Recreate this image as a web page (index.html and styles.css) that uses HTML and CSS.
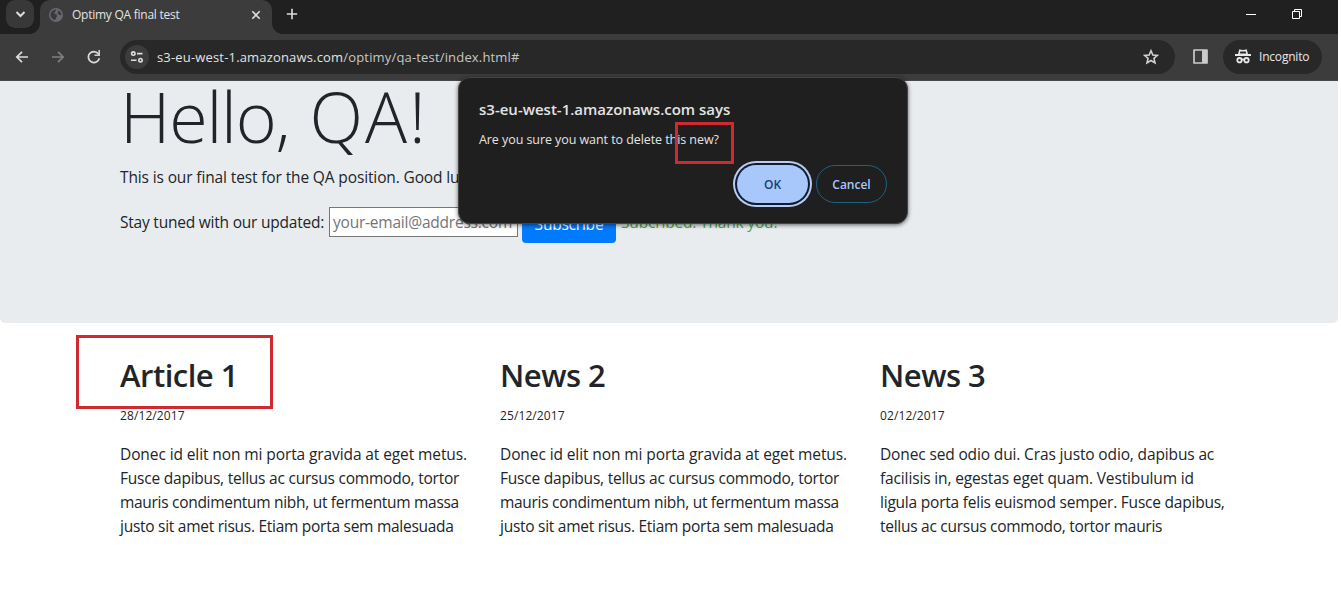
FILE: index.html
```html
<!DOCTYPE html>
<html lang="en">
<head>
<meta charset="utf-8">
<title>Optimy QA final test</title>
<link rel="stylesheet" href="styles.css">
</head>
<body>
<div class="browser">
  <header class="tabstrip">
    <div class="tab-search"><svg width="28" height="28" viewBox="0 0 28 28"><path class="st" stroke-width="2" d="M10.500 12l4 4 4-4"/></svg></div>
    <div class="tab">
      <svg class="globe" width="14" height="14" viewBox="0 0 14 14"><circle cx="7" cy="7" r="7" fill="#666970"/><path d="M1.500 6.500C1.800 3.800 4 1.600 7 1.500c.8.900-.2 1.700-1.200 2 .5 1-.3 1.800-1.200 2 1.400.4 3.200.8 3.500 2.300.1 1.200-1.300 1.600-1.300 2.700 0 .8-.6 1.500-1.200 1.600C3.300 11.300 1.600 9.300 1.500 6.500zM9 2.200c2 .8 3.300 2.600 3.500 4.600-.7.700-1.700.6-2.300 0-.5-.6-1.500-.5-1.900-1.200-.2-.8.900-1 1-1.700z" fill="#3a3a3b"/></svg>
      <span class="tab-title">Optimy QA final test</span>
      <svg class="tab-close" width="10" height="10" viewBox="0 0 10 10"><path class="st" stroke-width="1.600" d="M1.300 1.300l7.400 7.400M8.700 1.300L1.300 8.700"/></svg>
    </div>
    <svg class="plus" width="12" height="12" viewBox="0 0 12 12"><path class="st" stroke-width="1.600" d="M6 .8v10.400M.8 6h10.400"/></svg>
    <div class="window-buttons">
      <svg width="10" height="11" viewBox="0 0 10 11"><path d="M0 6.500h10" stroke="#fff"/></svg>
      <svg width="10" height="11" viewBox="0 0 10 11"><path d="M.5 3.500h7v7h-7zM2.500 3.500v-2h7v7h-2" fill="none" stroke="#fff"/></svg>
    </div>
  </header>
  <nav class="toolbar">
    <svg class="nav-icon" width="14" height="14" viewBox="0 0 14 14"><path class="st" stroke-width="1.700" d="M13 7H2M7 1.800L1.800 7 7 12.200"/></svg>
    <svg class="nav-icon dim" width="14" height="14" viewBox="0 0 14 14"><path class="st" stroke-width="1.700" d="M1 7h11M7 1.800L12.200 7 7 12.200"/></svg>
    <svg class="nav-icon" width="14" height="14" viewBox="0 0 14 14"><path class="st" stroke-width="1.700" d="M12.300 8.200A5.500 5.500 0 1 1 11.300 3.700L12.500 5"/><path d="M13 0v6H7.500V4.400h3.900V0z" fill="#d0d0d1"/></svg>
    <div class="omnibox">
      <span class="site-info"><svg width="14" height="12" viewBox="0 0 14 12"><g fill="none" stroke="#dedede" stroke-width="1.600"><circle cx="3.300" cy="2.600" r="1.700"/><path d="M7 2.600h5.500M1 9.200h5.500"/><circle cx="10.500" cy="9.200" r="1.700"/></g></svg></span>
      <span class="url"><b>s3-eu-west-1.amazonaws.com</b><i>/optimy/qa-test/index.html#</i></span>
      <svg class="star" width="16" height="16" viewBox="0 0 16 16"><path fill="none" stroke="#d2d2d3" stroke-width="1.600" d="M8 1.700l1.850 4.250 4.600.4-3.500 3.050 1.050 4.500L8 11.500l-4 2.400 1.050-4.500-3.500-3.050 4.600-.4z"/></svg>
    </div>
    <svg class="panel" width="15" height="15" viewBox="0 0 15 15"><path d="M1 1h13v13H1z" fill="none" stroke="#cbcbcc" stroke-width="1.700" stroke-linejoin="round"/><path d="M9 1h5v13H9z" fill="#cbcbcc"/></svg>
    <div class="incognito">
      <svg width="16" height="15" viewBox="0 0 16 15"><path d="M4.300.3Q8 1.500 11.700.3L13 5H16v2H0V5h3z" fill="#e8e8e8"/><path d="M5.300 2.400h5.400l.5 2H4.800z" fill="#292929"/><g fill="none" stroke="#e8e8e8" stroke-width="1.800"><circle cx="4.500" cy="11.200" r="2.200"/><circle cx="11.500" cy="11.200" r="2.200"/><path d="M6.800 10.800q1.200-.8 2.400 0"/></g></svg>
      <span class="incognito-label">Incognito</span>
    </div>
  </nav>
  <main class="page">
    <section class="jumbotron">
      <h1><span class="hello">Hello,</span> <span class="qa">QA!</span></h1>
      <p class="lead">This is our final test for the QA position. Good luck!</p>
      <div class="subscribe">
        <span class="subscribe-label">Stay tuned with our updated:</span>
        <span class="email">your-email@address.com</span>
        <span class="button">Subscribe</span>
        <span class="success">Subcribed. Thank you!</span>
      </div>
    </section>
    <section class="news">
      <article>
        <h2>Article 1</h2>
        <small>28/12/2017</small>
        <p><span class="t1">Donec id elit non mi porta gravida at eget metus.</span><span class="t3">Fusce dapibus, tellus ac cursus commodo, tortor</span><span class="t5">mauris condimentum nibh, ut fermentum massa</span><span class="t4">justo sit amet risus. Etiam porta sem malesuada</span></p>
      </article>
      <article>
        <h2>News 2</h2>
        <small>25/12/2017</small>
        <p><span class="t1">Donec id elit non mi porta gravida at eget metus.</span><span class="t3">Fusce dapibus, tellus ac cursus commodo, tortor</span><span class="t5">mauris condimentum nibh, ut fermentum massa</span><span class="t4">justo sit amet risus. Etiam porta sem malesuada</span></p>
      </article>
      <article>
        <h2>News 3</h2>
        <small>02/12/2017</small>
        <p><span class="t2">Donec sed odio dui. Cras justo odio, dapibus ac</span><span class="t2">facilisis in, egestas eget quam. Vestibulum id</span><span class="t3">ligula porta felis euismod semper. Fusce dapibus,</span><span class="t4">tellus ac cursus commodo, tortor mauris</span></p>
      </article>
    </section>
  </main>
  <div class="dialog">
    <div class="dialog-title">s3-eu-west-1.amazonaws.com says</div>
    <div class="dialog-text">Are you sure you want to delete this new?</div>
    <div class="dialog-actions"><span class="ok">OK</span><span class="cancel">Cancel</span></div>
  </div>
  <div class="mark mark-dialog"></div>
  <div class="mark mark-title"></div>
</div>
</body>
</html>
```
FILE: styles.css
```css
* { box-sizing: border-box; }
body { margin: 0; background: #fff; font-family: "Open Sans", "Noto Sans", sans-serif; }
svg { display: block; flex: none; }
.st { fill: none; stroke: #dcdcdc; }
.browser { position: relative; width: 1338px; height: 601px; overflow: hidden; white-space: nowrap; }

.tabstrip { display: flex; height: 34px; background: #202020; padding-left: 6px; }
.tab-search { width: 28px; height: 28px; border-radius: 9px; background: #383838; }
.tab { position: relative; display: flex; align-items: center; width: 232px; height: 34px; margin-left: 6px; padding: 0 11px 5px 9px; background: #3c3c3c; border-radius: 10px 10px 0 0; }
.tab::before, .tab::after { content: ""; position: absolute; bottom: 0; width: 10px; height: 10px; }
.tab::before { left: -10px; background: radial-gradient(circle at 0 0, transparent 9.500px, #3c3c3c 10px); }
.tab::after { right: -10px; background: radial-gradient(circle at 100% 0, transparent 9.500px, #3c3c3c 10px); }
.tab-title { margin-left: 9px; font-size: 12px; color: #e3e3e3; letter-spacing: -.25px; }
.tab-close { margin-left: auto; }
.plus { margin: 8px 0 0 14px; }
.window-buttons { display: flex; gap: 36px; margin: 8px 36px 0 auto; }

.toolbar { display: flex; align-items: center; height: 47px; padding: 0 16px 1px 15px; background: #3c3c3c; border-bottom: 1px solid #48484b; }
.nav-icon { margin-right: 22px; }
.nav-icon:nth-child(3) { margin-right: 19px; }
.dim { opacity: .42; }
.omnibox { display: flex; align-items: center; width: 1055px; height: 34px; padding: 0 16px 0 5px; border-radius: 17px; background: #282828; }
.site-info { display: flex; align-items: center; justify-content: center; width: 24px; height: 24px; border-radius: 12px; background: #3c3c3c; }
.url { margin-left: 8px; font-size: 13px; color: #e3e3e3; }
.url b { font-weight: 400; letter-spacing: .17px; }
.url i { font-style: normal; color: #c7c7c7; letter-spacing: .17px; }
.star { margin-left: auto; }
.panel { margin-left: 18px; }
.incognito { display: flex; align-items: center; width: 99px; height: 34px; margin-left: 15px; padding-left: 12px; border-radius: 17px; background: #282828; }
.incognito-label { margin-left: 8px; font-size: 12px; color: #e8e8e8; letter-spacing: -.2px; }

.page { color: #212529; font-size: 15.500px; }
.jumbotron { height: 242px; padding: 0 120px; border-radius: 0 0 5px 5px; background: #e9ecef; }
h1 { height: 77px; margin: 0; font-size: 70px; line-height: 71px; font-weight: 300; }
.hello { letter-spacing: -1.200px; }
.qa { margin-left: 2px; letter-spacing: 2px; }
.lead { margin: 0; padding-top: 7px; line-height: 24px; letter-spacing: -.13px; }
.subscribe { display: flex; align-items: center; margin-top: 14px; height: 38px; letter-spacing: -.22px; }
.subscribe-label { width: 209px; }
.email { width: 189px; height: 30px; padding: 0 3px; border: 1px solid #767676; background: #fff; color: #757575; line-height: 28px; }
.button { width: 94px; height: 38px; margin: 4px 0 0 4px; border-radius: 4px; background: #007bff; color: #fff; text-align: center; line-height: 38px; }
.success { margin-left: 5px; color: #4ca64c; letter-spacing: -.17px; }
.news { display: grid; grid-template-columns: repeat(3, 380px); padding: 33px 0 0 120px; }
h2 { margin: 0; font-size: 31px; line-height: 38px; font-weight: 600; letter-spacing: -.5px; }
small { display: block; margin-top: 10px; font-size: 12px; line-height: 24px; letter-spacing: .1px; }
.news p { display: grid; margin: 14px 0 0; line-height: 24px; }
.t1 { letter-spacing: -.1px; }
.t2 { letter-spacing: -.14px; }
.t3 { letter-spacing: -.22px; }
.t4 { letter-spacing: -.27px; }
.t5 { letter-spacing: -.3px; }

.dialog { position: absolute; left: 458px; top: 77px; width: 450px; height: 147px; padding: 20px 20px 0; border: 1px solid #444; border-radius: 12px; background: #1f1f1f; box-shadow: 0 1px 4px rgba(0,0,0,.6); color: #e3e3e3; }
.dialog-title { font-size: 15px; line-height: 22px; font-weight: 600; }
.dialog-text { margin-top: 10px; font-size: 12.500px; line-height: 20px; letter-spacing: -.07px; }
.dialog-actions { display: flex; justify-content: flex-end; gap: 8px; margin-top: 15px; font-size: 12px; line-height: 37px; text-align: center; font-weight: 600; }
.ok { width: 71px; height: 38px; border-radius: 19px; background: #a8c7fa; color: #123f7c; box-shadow: 0 0 0 2px #101c30, 0 0 0 4px #b7cdf4; line-height: 39px; }
.cancel { width: 71px; height: 38px; border: 1px solid #1b6284; border-radius: 19px; color: #a8c7fa; }
.mark { position: absolute; border: 3px solid #ce2a30; }
.mark-dialog { left: 675px; top: 122px; width: 59px; height: 42px; }
.mark-title { left: 76px; top: 335px; width: 197px; height: 74px; }
```
